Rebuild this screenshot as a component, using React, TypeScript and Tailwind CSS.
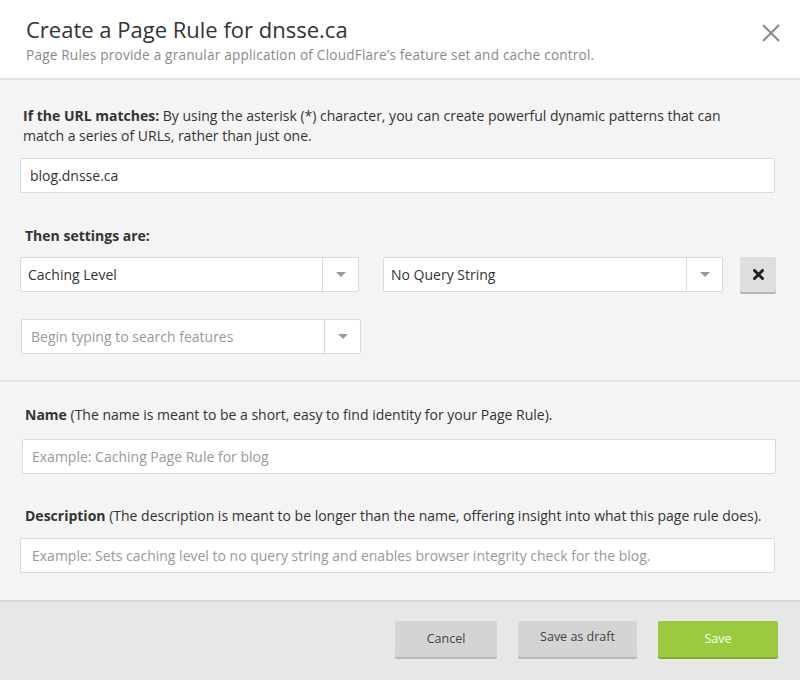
import React from "react";

function Caret() {
  return (
    <svg width="10" height="6" viewBox="0 0 10 6">
      <path d="M0 0 H10 L5 5 Z" fill="#999" />
    </svg>
  );
}

function Select({ value, placeholder, className }: { value?: string; placeholder?: string; className?: string }) {
  return (
    <div className={`flex h-[35px] bg-white border border-[#d9d9d9] rounded-[2px] ${className ?? ""}`}>
      <div className={`flex-1 flex items-center text-[14px] ${value ? "text-[#333] pl-[7px]" : "text-[#999] pl-[9px]"}`}>
        {value ?? placeholder}
      </div>
      <div className="w-[36px] border-l border-[#d9d9d9] flex items-center justify-center">
        <Caret />
      </div>
    </div>
  );
}

export default function App() {
  return (
    <div className="w-[800px] h-[680px] bg-[#f4f4f4] flex flex-col text-[#333]" style={{ fontFamily: "'Open Sans', sans-serif" }}>
      <div className="bg-white h-[80px] border-b-2 border-[#e3e3e3] flex items-start justify-between pl-[26px] pr-[20px]">
        <div className="pt-[15px]">
          <div className="text-[22px] leading-[28px] text-[#333]">Create a Page Rule for dnsse.ca</div>
          <div className="text-[13.6px] leading-[20px] text-[#8a8a8a] mt-[2px] tracking-[0.2px]">
            Page Rules provide a granular application of CloudFlare’s feature set and cache control.
          </div>
        </div>
        <svg className="mt-[24px]" width="18" height="18" viewBox="0 0 18 18">
          <path d="M1 1 L17 17 M17 1 L1 17" stroke="#8a8a8a" strokeWidth="2" />
        </svg>
      </div>

      <div className="px-[20px] pt-[26px] pb-[26px] border-b-2 border-[#e6e6e6]">
        <p className="pl-[3px] pr-[40px] text-[14px] leading-[20px]">
          <b>If the URL matches:</b> By using the asterisk (*) character, you can create powerful dynamic patterns that can match a series of URLs, rather than just one.
        </p>
        <div className="mt-[12px] mr-[5px] h-[35px] bg-white border border-[#d9d9d9] rounded-[2px] flex items-center pl-[9px] text-[14px]">
          blog.dnsse.ca
        </div>
        <div className="mt-[33px] pl-[5px] text-[14px] font-bold leading-[20px]">Then settings are:</div>
        <div className="mt-[11px] flex items-center">
          <Select value="Caching Level" className="w-[339px]" />
          <Select value="No Query String" className="w-[340px] ml-[24px]" />
          <div className="ml-[17px] w-[36px] h-[35px] bg-[#dedede] rounded-[2px] shadow-[0_2px_0_#b5b5b5] flex items-center justify-center">
            <svg width="11" height="11" viewBox="0 0 11 11">
              <path d="M1.5 1.5 L9.5 9.5 M9.5 1.5 L1.5 9.5" stroke="#222" strokeWidth="3" strokeLinecap="round" />
            </svg>
          </div>
        </div>
        <Select placeholder="Begin typing to search features" className="w-[340px] mt-[27px] ml-[1px]" />
      </div>

      <div className="px-[20px] pt-[23px] flex-1">
        <div className="pl-[5px] text-[14px] leading-[20px] [font-stretch:96%]">
          <b>Name</b> (The name is meant to be a short, easy to find identity for your Page Rule).
        </div>
        <div className="mt-[14px] ml-[2px] mr-[4px] h-[35px] bg-white border border-[#d9d9d9] rounded-[2px] flex items-center pl-[9px] text-[14px] text-[#999] [font-stretch:96%]">
          Example: Caching Page Rule for blog
        </div>
        <div className="mt-[32px] pl-[5px] text-[14px] leading-[20px] [font-stretch:96%]">
          <b>Description</b> (The description is meant to be longer than the name, offering insight into what this page rule does).
        </div>
        <div className="mt-[12px] mr-[5px] h-[35px] bg-white border border-[#d9d9d9] rounded-[2px] flex items-center pl-[11px] text-[14px] text-[#999] [font-stretch:96%]">
          Example: Sets caching level to no query string and enables browser integrity check for the blog.
        </div>
      </div>

      <div className="h-[80px] bg-[#e7e7e7] border-t-2 border-[#d8d8d8] flex items-start justify-end pr-[22px] pt-[19px] gap-[21px]">
        <button className="w-[102px] h-[36px] bg-[#d4d4d4] rounded-[2px] shadow-[0_2px_0_#b8b8b8] text-[12.5px] text-[#444]">Cancel</button>
        <button className="w-[119px] h-[36px] bg-[#d4d4d4] rounded-[2px] shadow-[0_2px_0_#b8b8b8] text-[12.5px] text-[#444] pb-[4px]">Save as draft</button>
        <button className="w-[120px] h-[36px] bg-[#9bca3e] rounded-[2px] shadow-[0_2px_0_#83ad2e] text-[12.5px] text-white">Save</button>
      </div>
    </div>
  );
}
